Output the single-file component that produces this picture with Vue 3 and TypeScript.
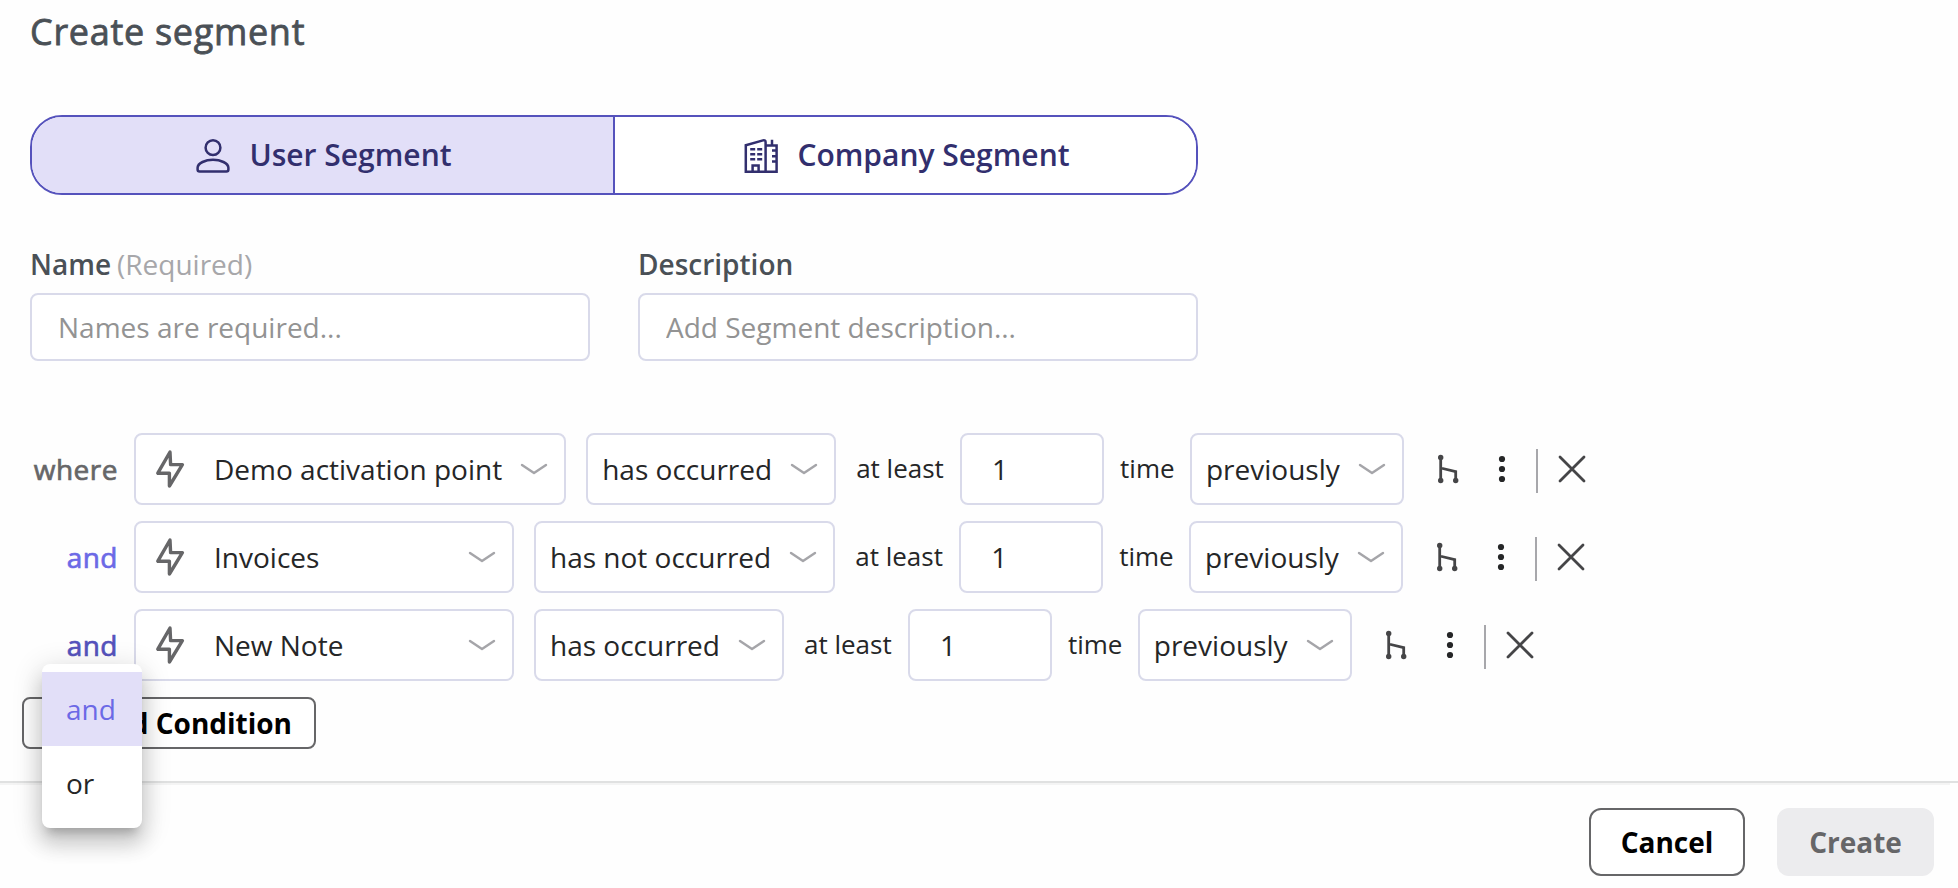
<script setup lang="ts">
import { ref } from "vue";

interface ICondition {
  joiner: string;
  event: string;
  operator: string;
  count: number;
  period: string;
}

const segmentType = ref<"user" | "company">("user");
const name = ref<string>("");
const description = ref<string>("");
const openJoiner = ref<number | null>(2);
const joiners = ["and", "or"];

const conditions = ref<ICondition[]>([
  {
    joiner: "where",
    event: "Demo activation point",
    operator: "has occurred",
    count: 1,
    period: "previously",
  },
  {
    joiner: "and",
    event: "Invoices",
    operator: "has not occurred",
    count: 1,
    period: "previously",
  },
  {
    joiner: "and",
    event: "New Note",
    operator: "has occurred",
    count: 1,
    period: "previously",
  },
]);

const toggleJoiner = (index: number) => {
  if (index === 0) return;
  openJoiner.value = openJoiner.value === index ? null : index;
};
const pickJoiner = (index: number, value: string) => {
  conditions.value[index].joiner = value;
  openJoiner.value = null;
};
const removeCondition = (index: number) => {
  conditions.value.splice(index, 1);
};
</script>

<template>
  <div class="page">
    <main class="content">
      <h1 class="title">Create segment</h1>

      <div class="tabs">
        <button
          class="tab"
          :class="{ active: segmentType === 'user' }"
          @click="segmentType = 'user'"
        >
          <svg class="tab-icon" viewBox="0 0 36 36">
            <circle cx="18" cy="10.7" r="7.4" />
            <path
              d="M4.6 34.4h26.8q2 0 2-2v-1.6c0-4.8-8-8-15.4-8s-15.4 3.2-15.4 8v1.6q0 2 2 2z"
            />
          </svg>
          <span>User Segment</span>
        </button>
        <button
          class="tab"
          :class="{ active: segmentType === 'company' }"
          @click="segmentType = 'company'"
        >
          <svg class="tab-icon" viewBox="0 0 36 36">
            <path
              d="M2.8 34.8V8.2L20 3.4q2.6-.6 2.6 1.8v29.6zM22.6 8.6h11v26.2h-11M29 8.6V2.8M9.6 34.8v-6.2h6v6.2"
            />
            <path
              d="M7.2 12.2h5M14.2 12.2h5M7.2 17.2h5M14.2 17.2h5M7.2 22.2h5M14.2 22.2h5M29 13.6h4.6M29 19.2h4.6M29 24.6h4.6"
            />
          </svg>
          <span>Company Segment</span>
        </button>
      </div>

      <div class="fields">
        <label class="field">
          <span class="field-label">
            <span>Name</span>
            <span class="hint">(Required)</span>
          </span>
          <input v-model="name" class="input" placeholder="Names are required..." />
        </label>
        <label class="field">
          <span class="field-label">Description</span>
          <input
            v-model="description"
            class="input"
            placeholder="Add Segment description..."
          />
        </label>
      </div>

      <div class="conditions">
        <div v-for="(item, index) in conditions" :key="index" class="condition">
          <div
            class="joiner"
            :class="{ first: index === 0, open: openJoiner === index }"
            @click="toggleJoiner(index)"
          >
            <span class="joiner-text">{{ item.joiner }}</span>
            <ul v-if="openJoiner === index" class="menu">
              <li
                v-for="option in joiners"
                :key="option"
                :class="{ selected: option === item.joiner }"
                @click.stop="pickJoiner(index, option)"
              >
                {{ option }}
              </li>
            </ul>
          </div>

          <div class="select event">
            <svg class="bolt" viewBox="0 0 30 38">
              <path d="M15 2L2.8 23.2H14.4V36L27.4 14.6H15.6z" />
            </svg>
            <span class="event-name">{{ item.event }}</span>
            <svg class="chevron" viewBox="0 0 28 12"><path d="M2 2l12 8 12-8" /></svg>
          </div>

          <div class="select operator">
            <span>{{ item.operator }}</span>
            <svg class="chevron" viewBox="0 0 28 12"><path d="M2 2l12 8 12-8" /></svg>
          </div>

          <span class="small at-least">at least</span>
          <input v-model="item.count" class="count" />
          <span class="small time">time</span>

          <div class="select period">
            <span>{{ item.period }}</span>
            <svg class="chevron" viewBox="0 0 28 12"><path d="M2 2l12 8 12-8" /></svg>
          </div>

          <svg class="branch" viewBox="0 0 22 30">
            <path d="M3.7 3.5v23M3.7 14l15 3.6v9" />
            <circle cx="3.7" cy="3.5" r="2.7" />
            <circle cx="3.7" cy="26.5" r="2.7" />
            <circle cx="18.7" cy="26.5" r="2.7" />
          </svg>
          <svg class="dots" viewBox="0 0 8 28">
            <circle cx="4" cy="4" r="3.1" />
            <circle cx="4" cy="14" r="3.1" />
            <circle cx="4" cy="24" r="3.1" />
          </svg>
          <span class="separator"></span>
          <svg class="close" viewBox="0 0 28 28" @click="removeCondition(index)">
            <path d="M2 2l24 24M26 2L2 26" />
          </svg>
        </div>
      </div>

      <button class="btn add">+ Add Condition</button>
    </main>

    <footer class="footer">
      <button class="btn cancel">Cancel</button>
      <button class="btn create" disabled>Create</button>
    </footer>
  </div>
</template>

<style>
body {
  margin: 0;
  background-color: #fefefe;
}
</style>

<style scoped>
.page {
  width: 1958px;
  height: 888px;
  overflow: hidden;
  box-sizing: border-box;
  font-family: "Open Sans", "Noto Sans", sans-serif;
  font-size: 28px;
  color: #252627;
}
.page *,
.page *::before {
  box-sizing: border-box;
}
button,
input {
  font: inherit;
  color: inherit;
  margin: 0;
}
svg {
  display: block;
  flex: none;
  fill: none;
}
span {
  white-space: nowrap;
}

.content {
  height: 781px;
}
.title {
  margin: 0;
  padding: 8px 0 0 30px;
  height: 115px;
  font-size: 36px;
  line-height: 48px;
  font-weight: 400;
  letter-spacing: 0.7px;
  -webkit-text-stroke: 0.8px currentColor;
  color: #4a5056;
}

.tabs {
  display: flex;
  width: 1168px;
  height: 80px;
  margin-left: 30px;
  border: 2px solid #5552bc;
  border-radius: 32px;
  overflow: hidden;
}
.tab {
  flex: 1;
  display: flex;
  align-items: center;
  justify-content: center;
  gap: 18.5px;
  padding: 0 0 1px 1.5px;
  border: none;
  background: #ffffff;
  color: #322f6e;
  font-size: 30px;
  font-weight: 600;
}
.tab + .tab {
  border-left: 2px solid #5552bc;
}
.tab.active {
  background: #e2dff8;
}
.tab-icon {
  width: 36px;
  height: 36px;
  stroke: #322f6e;
  stroke-width: 2.5;
}

.fields {
  display: flex;
  gap: 48px;
  padding: 50px 0 0 30px;
}
.field {
  width: 560px;
}
.field-label {
  display: flex;
  gap: 6px;
  height: 48px;
  line-height: 38px;
  font-weight: 600;
  color: #4a5056;
}
.hint {
  font-weight: 400;
  color: #a7a7aa;
}
.input {
  display: block;
  width: 560px;
  height: 68px;
  padding: 0 26px;
  border: 2px solid #d9daea;
  border-radius: 8px;
  background: #ffffff;
  outline: none;
}
.input::placeholder {
  color: #939393;
  opacity: 1;
}

.conditions {
  display: flex;
  flex-direction: column;
  gap: 16px;
  padding-top: 72px;
}
.condition {
  display: flex;
  align-items: center;
  height: 72px;
}
.joiner {
  position: relative;
  width: 118px;
  margin-right: 16px;
  text-align: right;
  color: #6c69e6;
  cursor: pointer;
}
.joiner-text {
  letter-spacing: 0.5px;
  -webkit-text-stroke: 0.7px currentColor;
}
.joiner.first {
  color: #666668;
  cursor: default;
}
.joiner.open {
  color: #5552bc;
}
.menu {
  position: absolute;
  z-index: 2;
  top: 38px;
  left: 42px;
  width: 100px;
  height: 164px;
  margin: 0;
  padding: 8px 0;
  list-style: none;
  text-align: left;
  color: #252627;
  background: #ffffff;
  border-radius: 8px;
  box-shadow:
    0 10px 10px -6px rgba(0, 0, 0, 0.2),
    0 16px 20px 2px rgba(0, 0, 0, 0.14),
    0 6px 28px 4px rgba(0, 0, 0, 0.12);
}
.menu li {
  height: 74px;
  padding-left: 24px;
  line-height: 74px;
}
.menu .selected {
  background: #e2dff8;
  color: #6c69e6;
}

.select {
  display: flex;
  align-items: center;
  justify-content: space-between;
  height: 72px;
  padding: 0 17px 0 14px;
  border: 2px solid #d9daea;
  border-radius: 8px;
  background: #ffffff;
}
.event {
  min-width: 380px;
  padding-left: 19px;
  margin-right: 20px;
}
.event-name {
  flex: 1;
  margin: 0 18px 0 29px;
}
.bolt {
  width: 30px;
  height: 38px;
  stroke: #666668;
  stroke-width: 3.4;
  stroke-linejoin: round;
}
.chevron {
  width: 28px;
  height: 12px;
  margin-right: -1px;
  stroke: #a5a5a9;
  stroke-width: 2.4;
  stroke-linecap: round;
  stroke-linejoin: round;
}
.operator .chevron,
.period .chevron {
  margin-left: 18px;
}
.small {
  position: relative;
  top: -1px;
  font-size: 26px;
}
.at-least {
  margin: 0 16.2px 0 20px;
}
.count {
  width: 144px;
  height: 72px;
  padding: 0 30px;
  border: 2px solid #d9daea;
  border-radius: 8px;
  background: #ffffff;
}
.time {
  margin: 0 15.4px 0 16px;
}
.branch {
  width: 22px;
  height: 30px;
  margin-left: 33px;
  stroke: #454547;
  stroke-width: 2.8;
}
.branch circle {
  fill: #454547;
  stroke: none;
}
.dots {
  width: 8px;
  height: 28px;
  margin-left: 39px;
  fill: #252627;
}
.separator {
  width: 2px;
  height: 44px;
  margin: 4px 20px 0 30px;
  background: #a7a7ab;
}
.close {
  width: 28px;
  height: 28px;
  stroke: #454547;
  stroke-width: 2.8;
  stroke-linecap: round;
}

.btn {
  display: flex;
  align-items: center;
  justify-content: center;
  padding: 0;
  border: 2px solid #666668;
  border-radius: 12px;
  background: #ffffff;
  color: #000000;
  font-weight: 700;
}
.add {
  width: 294px;
  height: 52px;
  margin: 16px 0 0 22px;
  padding-right: 22px;
  justify-content: flex-end;
  border-radius: 8px;
}
.footer {
  position: relative;
  display: flex;
  justify-content: flex-end;
  gap: 32px;
  height: 107px;
  padding: 25px 24px 0 0;
  border-top: 2px solid #e0e1e1;
}
.footer::before {
  content: "";
  position: absolute;
  top: 0;
  left: 0;
  width: 1950px;
  height: 2px;
  background: #f4f4f4;
}
.cancel {
  width: 156px;
  height: 68px;
}
.create {
  width: 157px;
  height: 68px;
  border-color: #ececee;
  background: #ececee;
  color: #666668;
}
</style>
